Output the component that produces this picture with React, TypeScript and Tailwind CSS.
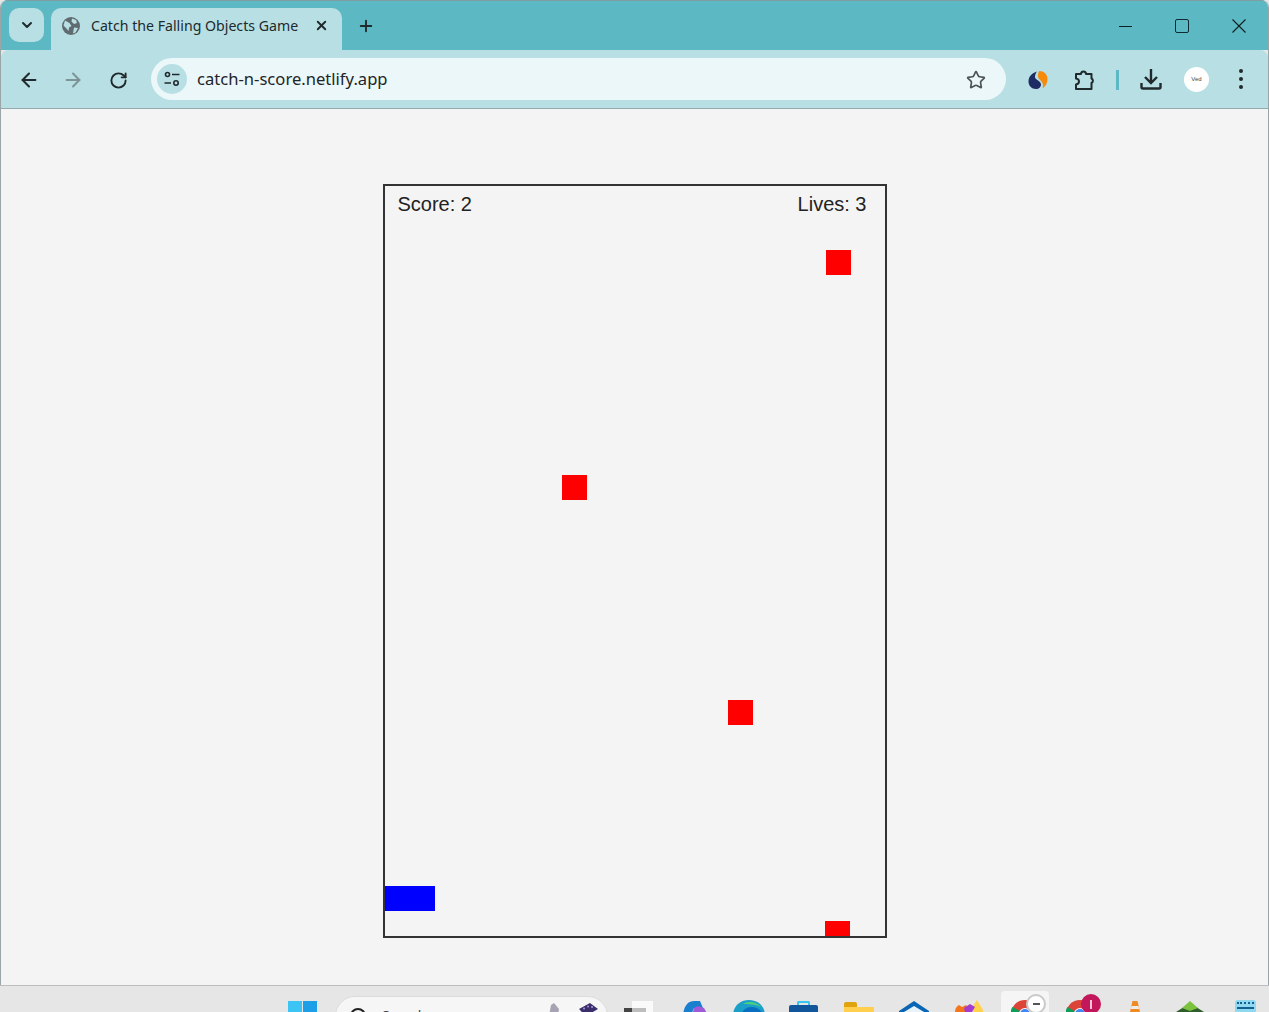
import { ArrowLeft, ArrowRight, ChevronDown, Plus, RotateCw, Star, X } from 'lucide-react';

const fallingObjects = [
    { id: 1, left: 441, top: 64 },
    { id: 2, left: 177, top: 289 },
    { id: 3, left: 343, top: 514 },
    { id: 4, left: 440, top: 735 },
];

function Globe() {
    return (
        <svg width="18" height="18" viewBox="0 0 18 18">
            <circle cx="9" cy="9" r="9" fill="#5f6b70" />
            <path d="M3 3.5 7.5 6 9.5 9 7 10.5 6.5 14 4 11 1.5 8.5ZM10 1.5l4 1.5 1 3-3 1-2.5-2.5ZM12 10.5l4 .5-2.5 4.5-2.5 1Z" fill="#b8e0e4" />
        </svg>
    );
}

function SiteControls() {
    return (
        <svg width="18" height="18" viewBox="0 0 18 18" fill="none" stroke="#20292c" strokeWidth="1.6">
            <circle cx="4.5" cy="4.5" r="2" />
            <path d="M9 4.5h7.5M1.5 13H8" />
            <circle cx="13" cy="13" r="2.2" />
        </svg>
    );
}

function SimilarwebLogo() {
    return (
        <svg width="20" height="20" viewBox="0 0 20 20">
            <path d="M9 1.5C4 3 .5 6.5.5 11.500c0 4 3 7.500 7.500 7.500 3 0 5-2 5-4.500 0-4-6.500-4.500-6-8 .2-2 1-3.500 2-5.500Z" fill="#1f2b63" />
            <path d="M11 1c5 0 8.500 3.500 8.500 8 0 4.500-2.500 8-5 9.500 1-3.500.5-5.500-1.500-7.500-2-2-3.500-3.500-3-6 .2-1.500.5-3 1-4Z" fill="#f58a0b" />
        </svg>
    );
}

function Puzzle() {
    return (
        <svg width="22" height="22" viewBox="0 0 22 22" fill="none" stroke="#20292c" strokeWidth="2" strokeLinejoin="round">
            <path d="M2 5h5a2.500 2.500 0 0 1 5 0h5.500v4.500a2.500 2.500 0 0 1 0 4.500V20H2v-4.500c2-.3 3-1.500 3-3s-1-2.800-3-3Z" />
        </svg>
    );
}

function Download() {
    return (
        <svg width="22" height="22" viewBox="0 0 22 22" fill="none" stroke="#20292c" strokeWidth="2.400">
            <path d="M11 1v13M5 9l6 6 6-6" />
            <path d="M1.500 15v4a1.500 1.500 0 0 0 1.500 1.500h16a1.500 1.500 0 0 0 1.500-1.500v-4" />
        </svg>
    );
}

function ChromeBadge({ children }: { children: React.ReactNode }) {
    return (
        <div className="relative h-[27px] w-[36px]">
            <svg width="28" height="28" viewBox="0 0 28 28" className="absolute left-0 top-[9px]">
                <circle cx="14" cy="14" r="14" fill="#db4437" />
                <path d="M14 14 L28 14 A14 14 0 0 1 10 27.500Z" fill="#f4b400" />
                <path d="M14 14 L10 28 A14 14 0 0 1 1.500 7Z" fill="#0f9d58" />
                <circle cx="14" cy="14" r="6" fill="#fff" />
                <circle cx="14" cy="14" r="5" fill="#4285f4" />
            </svg>
            {children}
        </div>
    );
}

function Taskbar() {
    return (
        <div className="flex h-[27px] items-start overflow-hidden border-t border-[#bdbdbd] bg-[#e6e6e6] pl-[288px]">
            <div className="mt-[15px] grid w-[29px] grid-cols-2 gap-[1px]">
                <div className="h-[14px] bg-[#3cc4f5]" />
                <div className="h-[14px] bg-[#1d9fe8]" />
                <div className="h-[14px] bg-[#1d9fe8]" />
                <div className="h-[14px] bg-[#0f7fd0]" />
            </div>
            <div className="ml-[18px] mt-[10px] flex h-[40px] w-[273px] items-start rounded-full border border-[#dcdcdc] bg-[#f6f6f6] pl-[13px] pt-[10px]">
                <svg width="20" height="20" viewBox="0 0 20 20" fill="none" stroke="#222" strokeWidth="2" className="shrink-0">
                    <circle cx="9" cy="9" r="7" />
                    <path d="m14 14 5 5" />
                </svg>
                <span className="ml-[13px] text-[14px] leading-[18px] text-[#444] [font-family:'Noto_Sans',sans-serif]">Search</span>
                <svg width="52" height="24" viewBox="0 0 52 24" className="ml-auto mr-[7px] mt-[-5px] shrink-0">
                    <path d="M1 14 3 3l3-2 5 6-2 12Z" fill="#a8a3b3" />
                    <path d="m26 16 4-1 2-5 5-2 5 5-10 8Z" fill="#a48fd0" />
                    <path d="m31 7 11-6 8 6-12 7Z" fill="#3a2f6b" />
                    <path d="M36 6.500h.1M40 4.500h.1M44 5h.1" stroke="#a48fd0" strokeWidth="2" strokeLinecap="round" />
                </svg>
            </div>
            <div className="relative ml-[14px] mt-[15px] h-[20px] w-[31px]">
                <div className="absolute left-[10px] top-0 h-[20px] w-[21px] bg-[#fafafa]" />
                <div className="absolute left-[2px] top-[7px] h-[13px] w-[22px] bg-[#444]" />
                <div className="absolute left-[10px] top-[7px] h-[13px] w-[14px] bg-[#bdbdbd]" />
            </div>
            <svg width="30" height="14" viewBox="0 0 30 14" className="ml-[27px] mt-[15px]">
                <path d="M3 14C4 5 8 0 14 0h6l6 14H18l-4-7-3 7Z" fill="#1b7fd0" />
                <path d="M14 7l4-2 6 2 4 7H12Z" fill="#a05ad8" />
            </svg>
            <svg width="32" height="14" viewBox="0 0 32 14" className="ml-[23px] mt-[14px]">
                <path d="M0 16C0 6 7 0 16 0s16 6 16 16Z" fill="#1aa0c8" />
                <path d="M8 16c1-6 5-9 11-9 5 0 9 3 13 9Z" fill="#0a6fc0" />
                <path d="M10 4c4-3 13-3 18 3-6-3-13-3-18-3Z" fill="#4fd07a" />
            </svg>
            <div className="ml-[24px] mt-[15px] w-[29px]">
                <div className="mx-auto h-[4px] w-[13px] rounded-t-[2px] border-2 border-b-0 border-[#3cc4f0]" />
                <div className="h-[20px] rounded-t-[2px] bg-[#11569b]" />
            </div>
            <div className="ml-[26px] mt-[16px] w-[30px]">
                <div className="h-[5px] w-[13px] rounded-t-[2px] bg-[#e0a30c]" />
                <div className="h-[20px] bg-[#ffcf4d]" />
            </div>
            <svg width="30" height="11" viewBox="0 0 30 11" className="ml-[25px] mt-[15px]">
                <path d="M15 0 30 10v1H0v-1Z" fill="#0b65b5" />
                <path d="M5 11l10-6 10 6Z" fill="#e8f2fa" />
            </svg>
            <svg width="29" height="12" viewBox="0 0 29 12" className="ml-[26px] mt-[14px]">
                <path d="M18 6 22 0l6 10v2H18Z" fill="#ffd24d" />
                <path d="M0 12c0-4 2-6 4-7l3 2 4-2 5 7Z" fill="#f5761a" />
                <path d="M9 8l6-4 5 3-3 5H10Z" fill="#a53cd0" />
            </svg>
            <div className="ml-[17px] mt-[5px] flex h-[40px] w-[48px] rounded-[4px] bg-[#f5f5f5] pl-[10px]">
                <ChromeBadge>
                    <div className="absolute left-[15px] top-[3px] flex h-[20px] w-[20px] items-center justify-center rounded-full border-2 border-[#c9c9c9] bg-white">
                        <div className="h-[2px] w-[7px] bg-[#555]" />
                    </div>
                </ChromeBadge>
            </div>
            <div className="ml-[17px] mt-[5px]">
                <ChromeBadge>
                    <div className="absolute left-[15px] top-[3px] flex h-[20px] w-[20px] items-center justify-center rounded-full bg-[#c2185b]">
                        <div className="h-[9px] w-[2px] bg-[#f4c6d8]" />
                    </div>
                </ChromeBadge>
            </div>
            <svg width="18" height="11" viewBox="0 0 18 11" className="ml-[24px] mt-[15px]">
                <path d="M6.500 0h5l2.500 11H4Z" fill="#f08a24" />
                <path d="M5.500 5h7l.7 3H4.800Z" fill="#f1ece4" />
            </svg>
            <svg width="28" height="11" viewBox="0 0 28 11" className="ml-[32px] mt-[15px]">
                <path d="M0 11 8 6l12 0 8 5Z" fill="#2e5f2a" />
                <path d="M6 7l8-7 8 7-8 3Z" fill="#7cc23f" />
            </svg>
            <div className="ml-[31px] mt-[14px] w-[21px] rounded-t-[3px] bg-[#8fd8f0] pb-[10px] pt-[2px]">
                <div className="mx-auto h-[2px] w-[17px] border-t-2 border-dotted border-[#11608f]" />
                <div className="mx-[2px] mt-[3px] h-[2px] bg-[#11608f]" />
            </div>
        </div>
    );
}

export default function App() {
    return (
        <div className="flex h-[1012px] w-[1269px] flex-col overflow-hidden bg-[#e6e6e6] [font-family:'Liberation_Sans',sans-serif]">
            <div className="flex min-h-0 flex-1 flex-col overflow-hidden rounded-t-[8px] border-x border-[#9aa5a7]">
                <div className="flex h-[50px] shrink-0 items-start border-t border-[#7f9ea3] bg-[#5cb8c2] pl-[8px] pt-[7px]">
                    <div className="flex h-[34px] w-[35px] items-center justify-center rounded-[10px] bg-[#b8e0e4]">
                        <ChevronDown size={16} strokeWidth={3} color="#20292c" />
                    </div>
                    <div className="ml-[7px] flex h-[42px] w-[291px] items-center rounded-t-[10px] bg-[#b8e0e4] pb-[6px] pl-[11px]">
                        <Globe />
                        <span className="ml-[11px] whitespace-nowrap text-[14.150px] text-[#20292c] [font-family:'Noto_Sans',sans-serif]">Catch the Falling Objects Game</span>
                        <X size={15} strokeWidth={3} color="#20292c" className="mb-[2px] ml-auto mr-[13px]" />
                    </div>
                    <Plus size={18} strokeWidth={2.500} color="#20292c" className="ml-[15px] mt-[9px]" />
                    <div className="ml-auto mr-[22px] flex items-center gap-[43px] pt-[11px]">
                        <div className="h-[1px] w-[13px] bg-[#0d1f22]" />
                        <div className="h-[14px] w-[14px] rounded-[2px] border border-[#0d2b30]" />
                        <svg width="14" height="14" viewBox="0 0 14 14" fill="none" stroke="#0d1f22" strokeWidth="1.100">
                            <path d="m.5.500 13 13M13.500.500l-13 13" />
                        </svg>
                    </div>
                </div>
                <div className="flex h-[59px] shrink-0 items-center rounded-t-[8px] border-b border-[#93a9ad] bg-[#b8e0e4] pl-[17px]">
                    <ArrowLeft size={22} strokeWidth={2.200} color="#20292c" className="mt-[2px]" />
                    <ArrowRight size={22} strokeWidth={2.200} color="#7c9498" className="ml-[22px] mt-[2px]" />
                    <RotateCw size={19} strokeWidth={2.400} color="#20292c" className="ml-[25px] mt-[2px]" />
                    <div className="ml-[23px] flex h-[42px] w-[855px] items-center rounded-full bg-[#ebf7f8] pl-[6px] pr-[20px]">
                        <div className="flex h-[30px] w-[30px] items-center justify-center rounded-full bg-[#b8e0e4]">
                            <SiteControls />
                        </div>
                        <span className="ml-[10px] mt-[1px] text-[16.600px] text-[#1d2528] [font-family:'Noto_Sans',sans-serif]">catch-n-score.netlify.app</span>
                        <Star size={20} strokeWidth={2} color="#4d5356" className="ml-auto mt-[2px]" />
                    </div>
                    <div className="ml-[22px] mt-[2px]">
                        <SimilarwebLogo />
                    </div>
                    <div className="ml-[26px] mt-[1px]">
                        <Puzzle />
                    </div>
                    <div className="ml-[20px] mt-[1px] h-[20px] w-[3px] bg-[#5cb8c2]" />
                    <div className="ml-[21px]">
                        <Download />
                    </div>
                    <div className="ml-[22px] flex h-[25px] w-[25px] items-center justify-center rounded-full bg-white text-[6px] text-[#444]">Ved</div>
                    <div className="ml-[30px] flex flex-col gap-[4px]">
                        <div className="h-[4px] w-[4px] rounded-full bg-[#20292c]" />
                        <div className="h-[4px] w-[4px] rounded-full bg-[#20292c]" />
                        <div className="h-[4px] w-[4px] rounded-full bg-[#20292c]" />
                    </div>
                </div>
                <div className="flex min-h-0 flex-1 justify-center bg-[#f4f4f4] pt-[75px]">
                    <div className="relative h-[754px] w-[504px] shrink-0 overflow-hidden border-2 border-[#333]">
                        <div className="flex justify-between pl-[13px] pr-[18px] pt-[5px] text-[20px] leading-[26px] text-[#222]">
                            <span>Score: 2</span>
                            <span>Lives: 3</span>
                        </div>
                        {fallingObjects.map((obj) => (
                            <div key={obj.id} className="absolute h-[25px] w-[25px] bg-[#ff0000]" style={{ left: obj.left, top: obj.top }} />
                        ))}
                        <div className="absolute left-0 top-[700px] h-[25px] w-[50px] bg-[#0000ff]" />
                    </div>
                </div>
            </div>
            <Taskbar />
        </div>
    );
}
